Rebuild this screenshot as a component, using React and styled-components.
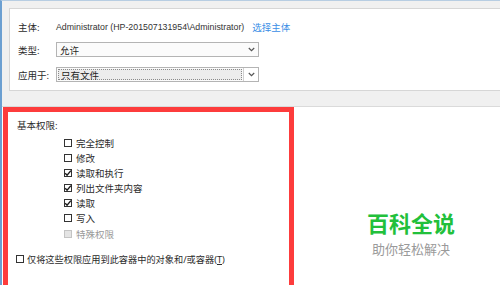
import React from 'react';
import styled, { createGlobalStyle } from 'styled-components';

const GlobalStyle = createGlobalStyle`
    html, body {
        margin: 0;
        padding: 0;
        background: #f0f0f0;
    }
    body {
        font-family: "Noto Sans", "Noto Sans CJK SC", sans-serif;
        color: #2b2b2b;
    }
`;

function Chevron() {
    return (
        <svg width="7" height="5" viewBox="0 0 7 5">
            <path d="M0.8 1 L3.5 3.7 L6.2 1" fill="none" stroke="#555" strokeWidth="1.2" />
        </svg>
    );
}

function Tick() {
    return (
        <svg width="8" height="8" viewBox="0 0 8 8">
            <path d="M1.2 4.2 L3.1 6.2 L6.9 1.6" fill="none" stroke="#1a1a1a" strokeWidth="1.4" />
        </svg>
    );
}

const perms = [
    { name: '完全控制', checked: false },
    { name: '修改', checked: false },
    { name: '读取和执行', checked: true },
    { name: '列出文件夹内容', checked: true },
    { name: '读取', checked: true },
    { name: '写入', checked: false },
    { name: '特殊权限', checked: false, disabled: true },
];

function App() {
    return (
        <>
            <GlobalStyle />
            <WindowStyled>
                <TopPanel>
                    <FieldRow $height={16}>
                        <Label>主体:</Label>
                        <Principal>Administrator (HP-201507131954\Administrator)</Principal>
                        <Link>选择主体</Link>
                    </FieldRow>
                    <FieldRow $height={15} $top={7}>
                        <Label>类型:</Label>
                        <Select>
                            <SelectValue>允许</SelectValue>
                            <ArrowCell><Chevron /></ArrowCell>
                        </Select>
                    </FieldRow>
                    <FieldRow $height={15} $top={10}>
                        <Label>应用于:</Label>
                        <Select>
                            <SelectValue $focused>只有文件</SelectValue>
                            <ArrowCell $split><Chevron /></ArrowCell>
                        </Select>
                    </FieldRow>
                </TopPanel>
                <BottomPanel>
                    <RedFrame>
                        <SectionTitle>基本权限:</SectionTitle>
                        <PermList>
                            {perms.map((p) => (
                                <PermRow key={p.name} $disabled={p.disabled}>
                                    <Box $disabled={p.disabled}>{p.checked && <Tick />}</Box>
                                    <span>{p.name}</span>
                                </PermRow>
                            ))}
                        </PermList>
                        <ApplyRow>
                            <Box />
                            <span>仅将这些权限应用到此容器中的对象和/或容器(<u>T</u>)</span>
                        </ApplyRow>
                    </RedFrame>
                    <Watermark>
                        <h3>百科全说</h3>
                        <p>助你轻松解决</p>
                    </Watermark>
                </BottomPanel>
            </WindowStyled>
        </>
    );
}

const WindowStyled = styled.div`
    width: 500px;
    height: 285px;
    box-sizing: border-box;
    border-left: 2px solid #6b9fd1;
    border-top: 1px solid #b7cde2;
    overflow: hidden;
    display: flex;
    flex-direction: column;
    font-size: 9.5px;
`;

const TopPanel = styled.div`
    flex-shrink: 0;
    margin: 7px 0 0 7px;
    height: 83px;
    box-sizing: border-box;
    background: #fff;
    border: 1px solid #d6d6d6;
    border-right: none;
    padding: 10px 0 0 8px;
    display: flex;
    flex-direction: column;
`;

const FieldRow = styled.div`
    display: flex;
    align-items: center;
    flex-shrink: 0;
    height: ${(p) => p.$height}px;
    margin-top: ${(p) => p.$top || 0}px;
`;

const Label = styled.span`
    width: 38px;
    flex-shrink: 0;
`;

const Principal = styled.span`
    font-family: "Liberation Sans", sans-serif;
    font-size: 8.8px;
    white-space: nowrap;
    color: #333;
`;

const Link = styled.span`
    color: #3a8ee6;
    margin-left: 8px;
`;

const Select = styled.div`
    width: 203px;
    height: 15px;
    box-sizing: border-box;
    border: 1px solid #b4b4b4;
    background: #fbfbfb;
    display: flex;
    align-items: stretch;
`;

const SelectValue = styled.div`
    flex: 1;
    display: flex;
    align-items: center;
    padding-left: ${(p) => (p.$focused ? '2px' : '3px')};
    margin: ${(p) => (p.$focused ? '1px' : '0')};
    background: ${(p) => (p.$focused ? '#ececec' : 'transparent')};
    border: ${(p) => (p.$focused ? '1px dotted #8a8a8a' : 'none')};
    color: #1e1e1e;
`;

const ArrowCell = styled.div`
    width: 14px;
    display: flex;
    align-items: center;
    justify-content: center;
    background: ${(p) => (p.$split ? '#fff' : 'transparent')};
    border-left: ${(p) => (p.$split ? '1px solid #d0d0d0' : 'none')};
`;

const BottomPanel = styled.div`
    position: relative;
    margin-top: 15px;
    flex: 1;
    min-height: 0;
    background: #fff;
    border-top: 1px solid #dadada;
`;

const RedFrame = styled.div`
    width: 291px;
    height: 190px;
    margin-left: 1px;
    box-sizing: border-box;
    border: 5px solid #fd3c3c;
    padding: 6px 0 0 9px;
`;

const SectionTitle = styled.div`
    line-height: 15px;
`;

const PermList = styled.div`
    margin: 2px 0 0 47px;
    display: flex;
    flex-direction: column;
`;

const PermRow = styled.label`
    display: flex;
    align-items: center;
    gap: 4px;
    height: 15.17px;
    color: ${(p) => (p.$disabled ? '#9a9a9a' : '#2b2b2b')};
`;

const Box = styled.span`
    width: 8px;
    height: 8px;
    box-sizing: border-box;
    flex-shrink: 0;
    border: 1px solid ${(p) => (p.$disabled ? '#c4c4c4' : '#333')};
    background: ${(p) => (p.$disabled ? '#e4e4e4' : '#fff')};
    display: flex;
    align-items: center;
    justify-content: center;
    svg {
        margin: -1px;
    }
`;

const ApplyRow = styled.label`
    display: flex;
    align-items: center;
    gap: 3px;
    height: 15px;
    margin: 10px 0 0 -1px;
    font-size: 9.2px;
    white-space: nowrap;
    u {
        text-decoration: underline;
    }
`;

const Watermark = styled.div`
    position: absolute;
    left: 365px;
    top: 104px;
    text-align: center;
    h3 {
        margin: 0;
        font-size: 22px;
        line-height: 24px;
        font-weight: 700;
        color: #22c03b;
    }
    p {
        margin: 6px 0 0;
        font-size: 13px;
        line-height: 16px;
        color: #9a9a9a;
    }
`;

export default App;
